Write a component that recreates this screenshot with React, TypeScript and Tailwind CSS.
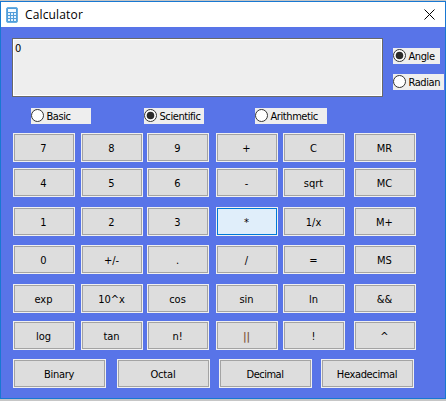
import React, { useState } from "react";

type Key = { label: string; tracking?: string };

const keys: Key[] = [
  { label: "7" }, { label: "8" }, { label: "9" }, { label: "+" }, { label: "C" }, { label: "MR" },
  { label: "4" }, { label: "5" }, { label: "6" }, { label: "-" }, { label: "sqrt" }, { label: "MC" },
  { label: "1" }, { label: "2" }, { label: "3" }, { label: "*" }, { label: "1/x" }, { label: "M+" },
  { label: "0" }, { label: "+/-" }, { label: "." }, { label: "/" }, { label: "=" }, { label: "MS" },
  { label: "exp" }, { label: "10^x" }, { label: "cos" }, { label: "sin" }, { label: "ln" }, { label: "&&" },
  { label: "log" }, { label: "tan" }, { label: "n!" }, { label: "||" }, { label: "!" }, { label: "^" },
];

const bases: Key[] = [
  { label: "Binary", tracking: "tracking-[-0.3px]" },
  { label: "Octal", tracking: "tracking-[-0.2px]" },
  { label: "Decimal", tracking: "tracking-[-0.5px]" },
  { label: "Hexadecimal", tracking: "tracking-[-0.35px]" },
];

function CalcButton({ label, width, tracking = "", focused = false }: Key & { width: string; focused?: boolean }) {
  const skin = focused ? "border-[#0078d7] bg-[#e0eefa]" : "border-[#a3a3a3] bg-[#dddddd]";
  const ink = label === "||" ? "font-bold text-[#80583f]" : "text-black";
  return (
    <button className={`h-[29px] border border-[#f0f0f0] bg-[#f0f0f0] ${width}`}>
      <span className={`flex h-full w-full items-center justify-center border pt-0.5 pr-px leading-none whitespace-nowrap ${skin} ${ink} ${tracking}`}>
        {label}
      </span>
    </button>
  );
}

function Radio({ label, width, checked, onSelect }: {
  label: string; width: string; checked: boolean; onSelect: () => void;
}) {
  return (
    <button role="radio" aria-checked={checked} onClick={onSelect} className={`flex h-4 items-center bg-[#eeeeee] ${width}`}>
      <svg viewBox="0 0 13 16" className="h-4 w-[13px] shrink-0">
        <circle cx="6.5" cy="7.5" r="6" fill="white" stroke="#333333" />
        {checked && <circle cx="6.5" cy="7.5" r="3.8" fill="#2b2b2b" />}
      </svg>
      <span className="ml-[2.5px] pt-0.5 leading-4 tracking-[-0.42px] whitespace-nowrap">{label}</span>
    </button>
  );
}

export default function App() {
  const [mode, setMode] = useState("Scientific");
  const [unit, setUnit] = useState("Angle");
  return (
    <div className="h-[401px] w-[446px] overflow-hidden bg-[#c6c6c6] pt-px font-['DejaVu_Sans_Condensed','DejaVu_Sans',sans-serif] text-[11px] text-black [font-stretch:condensed]">
      <div className="flex h-[398px] w-full flex-col border border-[#1878d2] bg-[#5874e8]">
        <header className="flex h-[25px] shrink-0 items-center bg-white pl-[5px]">
          <svg viewBox="0 0 12 16" className="h-4 w-3">
            <rect x="0.5" y="0.5" width="11" height="15" rx="1.5" fill="#519dd9" stroke="#68aee2" />
            <rect x="2" y="2" width="8" height="3" fill="#f4faff" />
            <path d="M2 6h2v2H2zM5 6h2v2H5zM8 6h2v2H8zM2 9h2v2H2zM5 9h2v2H5zM8 9h2v2H8zM2 12h2v2H2zM5 12h2v2H5zM8 12h2v2H8z" fill="#e5f3ff" />
          </svg>
          <h1 className="ml-[7px] font-['Open_Sans',sans-serif] text-[12px] leading-4 tracking-[0.15px] [font-stretch:normal]">Calculator</h1>
          <button aria-label="Close" className="mr-[10px] ml-auto">
            <svg viewBox="0 0 11 11" className="size-[11px]">
              <path d="M.5.5l10 10m0-10l-10 10" stroke="black" strokeWidth="1" fill="none" />
            </svg>
          </button>
        </header>

        <div className="mt-[11px] ml-[11px] flex h-[60px] items-start">
          <output className="block h-[59px] w-[371px] border border-[#696969] bg-[#eeeeee] shadow-[inset_0_0_0_1px_#ffffff]">
            <span className="mt-[3px] ml-[2px] block leading-[14px]">0</span>
          </output>
          <div className="mt-[10px] ml-[10px] flex flex-col gap-[10px]">
            <Radio label="Angle" width="w-[47px]" checked={unit === "Angle"} onSelect={() => setUnit("Angle")} />
            <Radio label="Radian" width="w-[51px]" checked={unit === "Radian"} onSelect={() => setUnit("Radian")} />
          </div>
        </div>

        <div className="mt-[10px] ml-[30px] flex">
          <Radio label="Basic" width="w-[60px]" checked={mode === "Basic"} onSelect={() => setMode("Basic")} />
          <div className="mr-[51px] ml-[53px]">
            <Radio label="Scientific" width="w-[60px]" checked={mode === "Scientific"} onSelect={() => setMode("Scientific")} />
          </div>
          <Radio label="Arithmetic" width="w-[72px]" checked={mode === "Arithmetic"} onSelect={() => setMode("Arithmetic")} />
        </div>

        <div className="mt-[9px] ml-3 grid grid-cols-[68px_66px_69px_67px_71px_62px] grid-rows-[35px_39px_38px_39px_37px_38px]">
          {keys.map((k) => (
            <CalcButton key={k.label} {...k} width="w-[62px]" focused={k.label === "*"} />
          ))}
        </div>

        <div className="ml-3 grid grid-cols-[104px_102px_102px_93px]">
          {bases.map((k) => (
            <CalcButton key={k.label} {...k} width="w-[93px]" />
          ))}
        </div>
      </div>
    </div>
  );
}
